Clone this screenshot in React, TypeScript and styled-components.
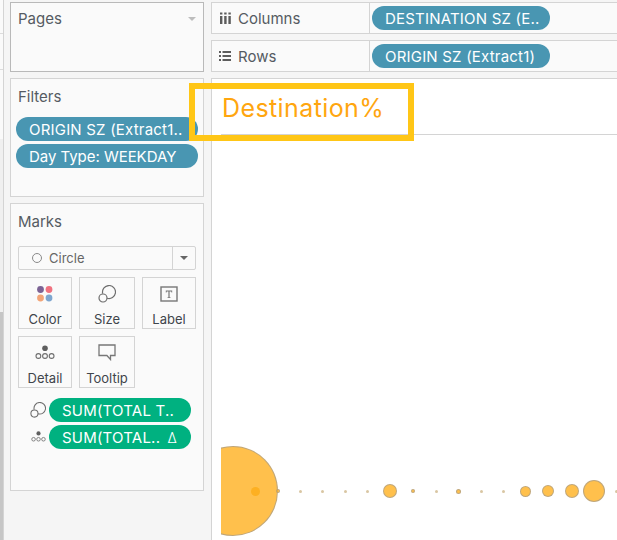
import React from 'react'
import styled, { createGlobalStyle } from 'styled-components'

const GlobalStyle = createGlobalStyle`
  html, body {
    margin: 0;
    padding: 0;
    background: #f5f5f5;
  }
  body {
    font-family: "Inter", "Open Sans", "Liberation Sans", sans-serif;
    overflow: hidden;
  }
`

const Page = styled.div`
  position: relative;
  display: flex;
  width: 617px;
  height: 540px;
  overflow: hidden;
  background: #f5f5f5;
`

const Strip = styled.div`
  width: 3px;
  flex: none;
  border-right: 1px solid #d4d4d4;
  display: flex;
  flex-direction: column;
`

const StripCell = styled.div<{ $h: number; $tone: string; $line?: boolean }>`
  height: ${p => p.$h}px;
  flex: none;
  box-sizing: border-box;
  background: ${p => p.$tone};
  border-bottom: ${p => (p.$line ? '1px solid #dcdcdc' : 'none')};
`

const Side = styled.div`
  width: 194px;
  flex: none;
  margin-left: 6px;
  padding-top: 2px;
  display: flex;
  flex-direction: column;
  gap: 6px;
`

const Card = styled.section<{ $h: number; $dark?: boolean }>`
  box-sizing: border-box;
  height: ${p => p.$h}px;
  background: #fafafa;
  border: 1px solid ${p => (p.$dark ? '#b9b9b9' : '#d4d4d4')};
  padding: 0 7px;
`

const CardHead = styled.div<{ $top: number }>`
  display: flex;
  align-items: center;
  justify-content: space-between;
  padding-top: ${p => p.$top}px;
  font-size: 15px;
  line-height: 19px;
  color: #555b62;
`

const Caret = styled.span<{ $color?: string }>`
  width: 0;
  height: 0;
  border-left: 4px solid transparent;
  border-right: 4px solid transparent;
  border-top: 4px solid ${p => p.$color || '#bdbdbd'};
`

const PillStack = styled.div<{ $top: number; $left?: number }>`
  display: flex;
  flex-direction: column;
  gap: 3px;
  margin-top: ${p => p.$top}px;
  margin-left: ${p => p.$left || 0}px;
`

const Pill = styled.div<{ $green?: boolean; $tight?: boolean; $w: number }>`
  box-sizing: border-box;
  width: ${p => p.$w}px;
  height: 24px;
  border-radius: 12px;
  padding: 0 14px 0 13px;
  display: flex;
  align-items: center;
  justify-content: space-between;
  white-space: nowrap;
  font-size: 15px;
  letter-spacing: ${p => (p.$tight ? '-0.04px' : '0.2px')};
  color: #fff;
  background: ${p => (p.$green ? '#00b180' : '#4996b2')};
`

const DeltaMark = styled.span`
  font-size: 14px;
  font-weight: 300;
`

const Select = styled.div`
  box-sizing: border-box;
  height: 24px;
  margin: 15px 0 0;
  background: #fafafa;
  border: 1px solid #d4d4d4;
  border-radius: 2px;
  display: flex;
  align-items: center;
  font-size: 13px;
  color: #666;
`

const SelectBody = styled.div`
  flex: 1;
  display: flex;
  align-items: center;
  gap: 7px;
  padding-left: 13px;
`

const SelectBtn = styled.div`
  width: 22px;
  height: 100%;
  border-left: 1px solid #d4d4d4;
  display: flex;
  align-items: center;
  justify-content: center;
`

const Ring = styled.span`
  box-sizing: border-box;
  width: 10px;
  height: 10px;
  border: 1px solid #8a8a8a;
  border-radius: 50%;
`

const Tiles = styled.div`
  display: grid;
  grid-template-columns: 54px 56px 54px;
  grid-auto-rows: 52px;
  column-gap: 7px;
  row-gap: 7px;
  margin-top: 7px;
`

const Tile = styled.div`
  box-sizing: border-box;
  border: 1px solid #d4d4d4;
  display: flex;
  flex-direction: column;
  align-items: center;
  font-size: 13px;
  line-height: 17px;
  color: #3f454b;
`

const TileIcon = styled.div`
  height: 31px;
  display: flex;
  align-items: center;
  justify-content: center;
  padding: 0 0 2px;
`

const EncodeList = styled.div`
  display: grid;
  grid-template-columns: 18px 142px;
  column-gap: 2px;
  row-gap: 3px;
  align-items: center;
  margin-top: 10px;
  margin-left: 11px;
`

const EncodeIcon = styled.div`
  display: flex;
  justify-content: center;
`

const Main = styled.div`
  flex: 1;
  margin-left: 7px;
  padding-top: 2px;
  display: flex;
  flex-direction: column;
  gap: 6px;
  min-width: 0;
`

const Shelf = styled.div`
  box-sizing: border-box;
  height: 32px;
  display: flex;
  align-items: center;
  background: #fafafa;
  border: 1px solid #d4d4d4;
  border-right: none;
`

const ShelfLabel = styled.div`
  box-sizing: border-box;
  width: 158px;
  height: 100%;
  flex: none;
  display: flex;
  align-items: center;
  gap: 7px;
  padding-left: 7px;
  border-right: 1px solid #d4d4d4;
  font-size: 15px;
  color: #555b62;
`

const ShelfIcon = styled.span`
  width: 12px;
  display: flex;
  justify-content: center;
`

const ShelfBody = styled.div`
  padding-left: 2px;
`

const View = styled.div`
  flex: 1;
  display: flex;
  flex-direction: column;
  background: #fff;
  border-left: 1px solid #d4d4d4;
  border-top: 1px solid #d4d4d4;
`

const ViewTitle = styled.div`
  box-sizing: border-box;
  height: 56px;
  margin-left: 9px;
  padding: 14px 0 0 1px;
  border-bottom: 1px solid #d4d4d4;
  font-size: 25px;
  letter-spacing: 0.4px;
  line-height: 30px;
  color: #ffa60f;
`

const Chart = styled.div`
  position: relative;
  flex: 1;
  margin-left: 9px;
  overflow: hidden;
`

const Bubble = styled.span<{ $x: number; $r: number }>`
  position: absolute;
  box-sizing: border-box;
  left: ${p => p.$x - 221 - p.$r}px;
  top: ${p => 491 - 135 - p.$r}px;
  width: ${p => p.$r * 2}px;
  height: ${p => p.$r * 2}px;
  border-radius: 50%;
  background: rgba(255, 176, 31, 0.8);
  border: 1px solid rgba(150, 150, 150, 0.6);
`

const InnerDot = styled(Bubble)`
  background: #fdb022;
  border: none;
`

const TinyDot = styled(Bubble)`
  background: #d9c6a3;
  border: none;
`

const Highlight = styled.div`
  position: absolute;
  box-sizing: border-box;
  left: 189px;
  top: 83px;
  width: 225px;
  height: 58px;
  border: 6px solid #ffc616;
`

const BUBBLES = [
  { x: 233, r: 45 },
  { x: 277.5, r: 2 },
  { x: 390, r: 7 },
  { x: 413, r: 2 },
  { x: 458.5, r: 2.5 },
  { x: 525.5, r: 5.5 },
  { x: 548, r: 6 },
  { x: 571.5, r: 7 },
  { x: 593.5, r: 11 },
]

const TINY_DOTS = [300, 322.5, 345, 367.5, 436, 481, 503, 616]

const ColorIcon = () => (
  <svg width="18" height="18" viewBox="0 0 18 18">
    <circle cx="4.5" cy="4.5" r="3.4" fill="#7b6294" />
    <circle cx="13" cy="4.5" r="3.4" fill="#f0717f" />
    <circle cx="4.5" cy="13" r="3.4" fill="#f2a477" />
    <circle cx="13" cy="13" r="3.4" fill="#7ea6cf" />
  </svg>
)

const SizeIcon = ({ size = 18 }: { size?: number }) => (
  <svg width={size} height={size} viewBox="0 0 18 18" fill="none" stroke="#6e6e6e" strokeWidth="1.2">
    <path d="M4.7 8.6A6.5 6.5 0 1 1 9 13.2" />
    <circle cx="5" cy="13" r="4" />
  </svg>
)

const LabelIcon = () => (
  <svg width="18" height="16" viewBox="0 0 18 16">
    <rect x="1" y="1" width="16" height="14" fill="none" stroke="#777" strokeWidth="1.4" />
    <path d="M5.8 4.6h6.4v2h-.7l-.3-1h-1.6v5.6l1 .3v.6H7.4v-.6l1-.3V5.6H6.8l-.3 1h-.7z" fill="#777" />
  </svg>
)

const DetailIcon = ({ size = 20 }: { size?: number }) => (
  <svg width={size} height={size * 0.75} viewBox="0 0 20 15" fill="none" stroke="#6e6e6e" strokeWidth="1.1">
    <circle cx="10" cy="3.2" r="2.8" fill="#5f5f5f" stroke="none" />
    <circle cx="3.4" cy="11" r="2.4" />
    <circle cx="10" cy="11" r="2.4" />
    <circle cx="16.6" cy="11" r="2.4" />
  </svg>
)

const TooltipIcon = () => (
  <svg width="18" height="17" viewBox="0 0 18 17" fill="none" stroke="#777" strokeWidth="1.3">
    <path d="M1 1h16v10.5h-4.5v4l-3.6-4H1z" />
  </svg>
)

const ColumnsIcon = () => (
  <svg width="11" height="12" viewBox="0 0 11 12" fill="#5c5c5c">
    <rect x="0" y="0.5" width="2.4" height="2" />
    <rect x="4.2" y="0.5" width="2.4" height="2" />
    <rect x="8.4" y="0.5" width="2.4" height="2" />
    <rect x="0" y="4" width="2.4" height="8" />
    <rect x="4.2" y="4" width="2.4" height="8" />
    <rect x="8.4" y="4" width="2.4" height="8" />
  </svg>
)

const RowsIcon = () => (
  <svg width="12" height="10" viewBox="0 0 12 10" fill="#5c5c5c">
    <rect x="0" y="0" width="2" height="2" />
    <rect x="3.5" y="0" width="8.5" height="2" />
    <rect x="0" y="4" width="2" height="2" />
    <rect x="3.5" y="4" width="8.5" height="2" />
    <rect x="0" y="8" width="2" height="2" />
    <rect x="3.5" y="8" width="8.5" height="2" />
  </svg>
)

function App() {
  return (
    <Page>
      <GlobalStyle />

      <Strip>
        <StripCell $h={34} $tone="#fafafa" $line />
        <StripCell $h={36} $tone="#fafafa" $line />
        <StripCell $h={69} $tone="#fafafa" />
        <StripCell $h={173} $tone="#f0f0f0" />
        <StripCell $h={228} $tone="#c6c6c6" />
      </Strip>

      <Side>
        <Card $h={70} $dark>
          <CardHead $top={6}>
            Pages
            <Caret />
          </CardHead>
        </Card>

        <Card $h={119}>
          <CardHead $top={8}>Filters</CardHead>
          <PillStack $top={11} $left={-2}>
            <Pill $w={182}>ORIGIN SZ (Extract1..</Pill>
            <Pill $w={182} $tight>Day Type: WEEKDAY</Pill>
          </PillStack>
        </Card>

        <Card $h={288}>
          <CardHead $top={8}>Marks</CardHead>
          <Select>
            <SelectBody>
              <Ring />
              Circle
            </SelectBody>
            <SelectBtn>
              <Caret $color="#666" />
            </SelectBtn>
          </Select>
          <Tiles>
            <Tile>
              <TileIcon><ColorIcon /></TileIcon>
              Color
            </Tile>
            <Tile>
              <TileIcon><SizeIcon /></TileIcon>
              Size
            </Tile>
            <Tile>
              <TileIcon><LabelIcon /></TileIcon>
              Label
            </Tile>
            <Tile>
              <TileIcon><DetailIcon /></TileIcon>
              Detail
            </Tile>
            <Tile>
              <TileIcon><TooltipIcon /></TileIcon>
              Tooltip
            </Tile>
          </Tiles>
          <EncodeList>
            <EncodeIcon><SizeIcon size={16} /></EncodeIcon>
            <Pill $green $w={142}>SUM(TOTAL T..</Pill>
            <EncodeIcon><DetailIcon size={15} /></EncodeIcon>
            <Pill $green $w={142}>
              SUM(TOTAL..
              <DeltaMark>Δ</DeltaMark>
            </Pill>
          </EncodeList>
        </Card>
      </Side>

      <Main>
        <Shelf>
          <ShelfLabel>
            <ShelfIcon><ColumnsIcon /></ShelfIcon>
            Columns
          </ShelfLabel>
          <ShelfBody><Pill $w={178}>DESTINATION SZ (E..</Pill></ShelfBody>
        </Shelf>
        <Shelf>
          <ShelfLabel>
            <ShelfIcon><RowsIcon /></ShelfIcon>
            Rows
          </ShelfLabel>
          <ShelfBody><Pill $w={178}>ORIGIN SZ (Extract1)</Pill></ShelfBody>
        </Shelf>
        <View>
          <ViewTitle>Destination%</ViewTitle>
          <Chart>
            {BUBBLES.map(b => (
              <Bubble key={b.x} $x={b.x} $r={b.r} />
            ))}
            {TINY_DOTS.map(x => (
              <TinyDot key={x} $x={x} $r={1.5} />
            ))}
            <InnerDot $x={255} $r={4.5} />
          </Chart>
        </View>
      </Main>

      <Highlight />
    </Page>
  )
}

export default App
